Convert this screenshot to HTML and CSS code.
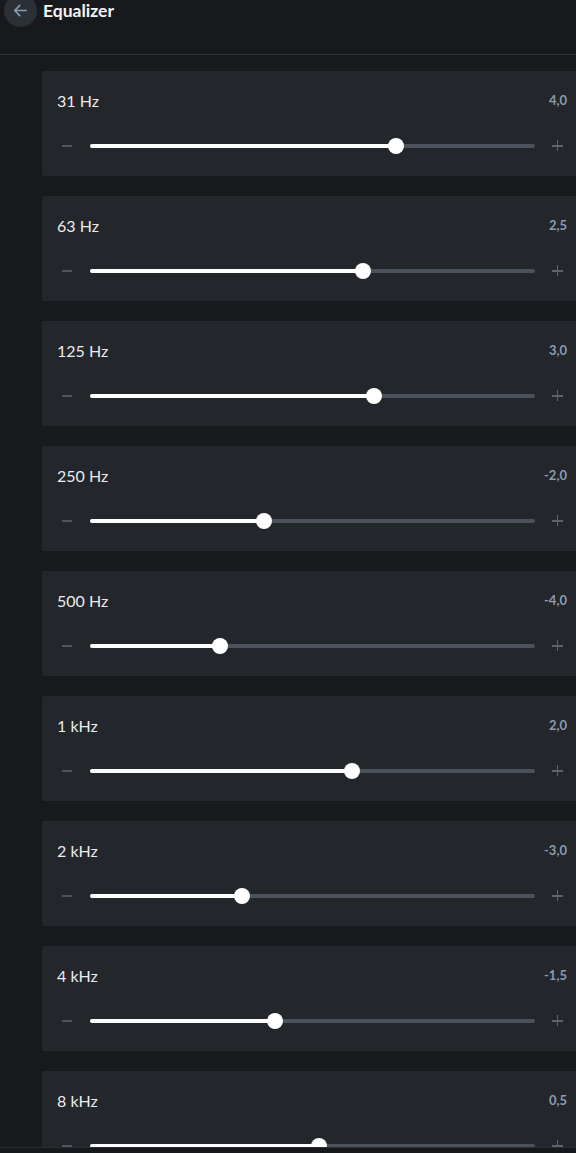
FILE: index.html
```html
<!DOCTYPE html>
<html lang="en">
<head>
<meta charset="utf-8">
<title>Equalizer</title>
<link rel="stylesheet" href="styles.css">
</head>
<body>
<header class="topbar">
  <button class="back" aria-label="Back">
    <svg viewBox="0 0 16 16" width="17" height="17"><path d="M13.5 8H2.5M7.3 3.2L2.5 8l4.8 4.8" fill="none" stroke="#8c9bb1" stroke-width="1.5" stroke-linecap="round" stroke-linejoin="round"/></svg>
  </button>
  <h1 class="title">Equalizer</h1>
</header>
<main class="list">
  <section class="band"><div class="band-head"><span class="band-name">31 Hz</span><span class="band-value">4,0</span></div>
    <div class="slider"><span class="minus"></span><div class="track"><div class="fill" style="width:68.76%"></div></div><span class="plus"></span></div></section>
  <section class="band"><div class="band-head"><span class="band-name">63 Hz</span><span class="band-value">2,5</span></div>
    <div class="slider"><span class="minus"></span><div class="track"><div class="fill" style="width:61.35%"></div></div><span class="plus"></span></div></section>
  <section class="band"><div class="band-head"><span class="band-name">125 Hz</span><span class="band-value">3,0</span></div>
    <div class="slider"><span class="minus"></span><div class="track"><div class="fill" style="width:63.82%"></div></div><span class="plus"></span></div></section>
  <section class="band"><div class="band-head"><span class="band-name">250 Hz</span><span class="band-value">-2,0</span></div>
    <div class="slider"><span class="minus"></span><div class="track"><div class="fill" style="width:39.10%"></div></div><span class="plus"></span></div></section>
  <section class="band"><div class="band-head"><span class="band-name">500 Hz</span><span class="band-value">-4,0</span></div>
    <div class="slider"><span class="minus"></span><div class="track"><div class="fill" style="width:29.21%"></div></div><span class="plus"></span></div></section>
  <section class="band"><div class="band-head"><span class="band-name">1 kHz</span><span class="band-value">2,0</span></div>
    <div class="slider"><span class="minus"></span><div class="track"><div class="fill" style="width:58.88%"></div></div><span class="plus"></span></div></section>
  <section class="band"><div class="band-head"><span class="band-name">2 kHz</span><span class="band-value">-3,0</span></div>
    <div class="slider"><span class="minus"></span><div class="track"><div class="fill" style="width:34.16%"></div></div><span class="plus"></span></div></section>
  <section class="band"><div class="band-head"><span class="band-name">4 kHz</span><span class="band-value">-1,5</span></div>
    <div class="slider"><span class="minus"></span><div class="track"><div class="fill" style="width:41.57%"></div></div><span class="plus"></span></div></section>
  <section class="band"><div class="band-head"><span class="band-name">8 kHz</span><span class="band-value">0,5</span></div>
    <div class="slider"><span class="minus"></span><div class="track"><div class="fill" style="width:51.46%"></div></div><span class="plus"></span></div></section>
</main>
<footer class="bottombar"></footer>
</body>
</html>
```
FILE: styles.css
```css
* { box-sizing: border-box; }
html, body { margin: 0; padding: 0; }
body {
  background: #18191d;
  font-family: Lato, "Noto Sans", sans-serif;
  color: #e8e8e8;
  overflow: hidden;
  height: 1153px;
}
.topbar {
  height: 55px;
  border-bottom: 1px solid #2e3035;
  display: flex;
  align-items: flex-start;
  padding-left: 4px;
  gap: 6px;
}
.back {
  width: 33px;
  height: 33px;
  margin-top: -6px;
  border-radius: 50%;
  border: none;
  background: #2b2f36;
  display: flex;
  align-items: center;
  justify-content: center;
  padding: 0;
}
.title {
  margin: 0;
  font-size: 17.5px;
  font-weight: 700;
  line-height: 22px;
  color: #f4f4f4;
}
.list {
  padding: 16px 0 0 42px;
  display: flex;
  flex-direction: column;
  gap: 20px;
}
.band {
  background: #23262b;
  border-radius: 2px 0 0 2px;
  height: 105px;
  padding: 19px 9px 0 15px;
}
.band-head {
  display: flex;
  justify-content: space-between;
  align-items: center;
  height: 20px;
}
.band-name {
  font-size: 16px;
  color: #ebebeb;
}
.band-value {
  font-size: 13px;
  font-weight: 700;
  color: #8c9bb0;
}
.slider {
  margin-top: 28px;
  height: 16px;
  display: flex;
  align-items: center;
}
.minus, .plus {
  width: 20px;
  height: 16px;
  position: relative;
  flex: none;
}
.minus::before, .plus::before, .plus::after {
  content: "";
  position: absolute;
  background: #4d545e;
}
.minus::before {
  left: 5px; top: 7px; width: 10px; height: 2px;
}
.plus::before {
  left: 5px; top: 7px; width: 11px; height: 1.6px; background: #5a6470;
}
.plus::after {
  left: 9.7px; top: 2px; width: 1.6px; height: 11px; background: #5a6470;
}
.track {
  flex: 1;
  height: 4px;
  margin: 0 12px 0 13px;
  border-radius: 2px;
  background: #4b525c;
}
.fill {
  position: relative;
  height: 4px;
  border-radius: 2px;
  background: #ffffff;
}
.fill::after {
  content: "";
  position: absolute;
  right: -8px;
  top: -6px;
  width: 16px;
  height: 16px;
  border-radius: 50%;
  background: #ffffff;
}
.bottombar {
  position: fixed;
  left: 0;
  right: 0;
  bottom: 0;
  height: 6px;
  background: #17181c;
  border-top: 1px solid #2a2c31;
}
```
